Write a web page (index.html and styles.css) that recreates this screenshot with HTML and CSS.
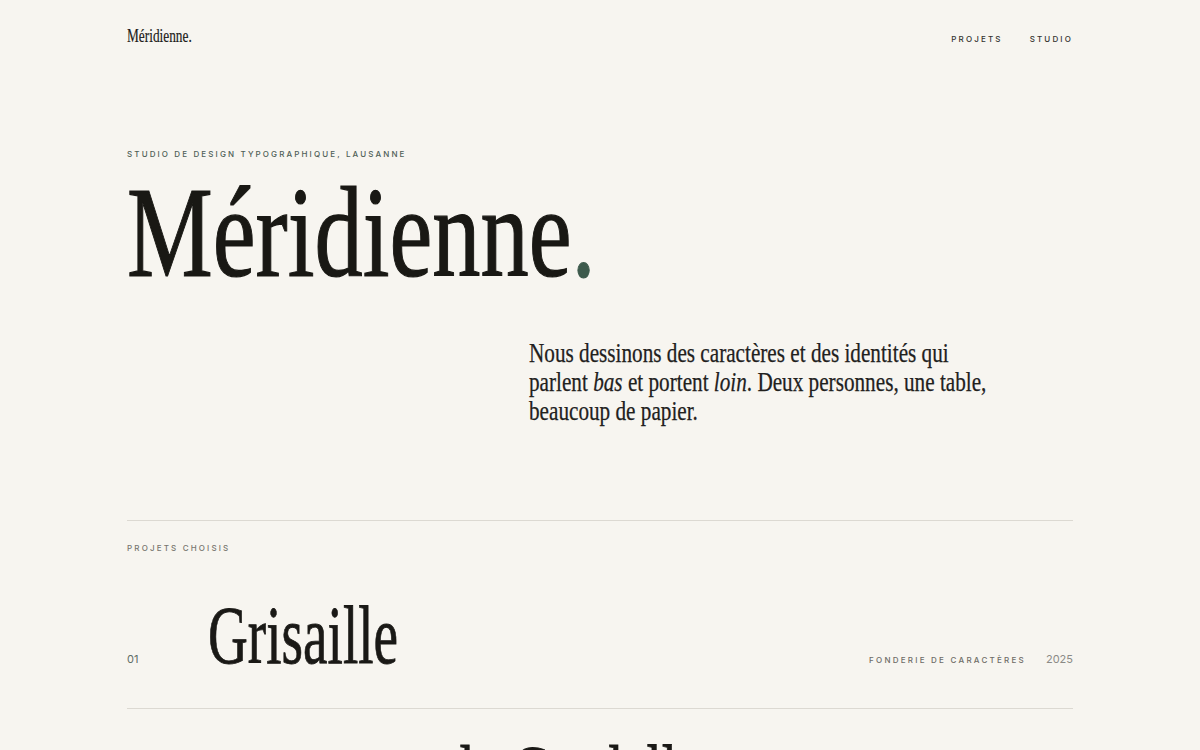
FILE: index.html
```html
<!DOCTYPE html>
<html lang="fr">
<head>
<meta charset="utf-8">
<title>Méridienne.</title>
<link rel="stylesheet" href="styles.css">
</head>
<body>
<div class="page">
  <header class="site-header">
    <a class="logo" href="#"><span class="logo-text">Méridienne.</span></a>
    <nav class="nav">
      <a href="#">Projets</a>
      <a href="#">Studio</a>
    </nav>
  </header>

  <section class="hero">
    <p class="eyebrow">Studio de design typographique, Lausanne</p>
    <h1 class="hero-title"><span class="hero-text">Méridienne<span class="dot">.</span></span></h1>
    <p class="intro">Nous dessinons des caractères et des identités qui parlent <em>bas</em> et portent <em>loin</em>. Deux personnes, une table, beaucoup de papier.</p>
  </section>

  <section class="projects">
    <h2 class="section-label">Projets choisis</h2>
    <ul class="project-list">
      <li class="project">
        <span class="project-num">01</span>
        <span class="project-title"><span class="project-name">Grisaille</span></span>
        <span class="project-meta">Fonderie de caractères</span>
        <span class="project-year">2025</span>
      </li>
      <li class="project">
        <span class="project-num">02</span>
        <span class="project-title"><span class="project-name">murmures de Cordelle</span></span>
        <span class="project-meta">Identité visuelle</span>
        <span class="project-year">2024</span>
      </li>
    </ul>
  </section>
</div>
</body>
</html>
```

FILE: styles.css
```css
* { box-sizing: border-box; }

html, body {
  margin: 0;
  padding: 0;
  background: #f7f5f0;
  color: #1a1916;
}

body {
  font-family: "Liberation Serif", "Times New Roman", serif;
}

a { color: inherit; text-decoration: none; }

.page {
  width: 946px;
  margin: 0 auto;
}

/* Header */
.site-header {
  display: flex;
  justify-content: space-between;
  align-items: baseline;
  padding-top: 26px;
}

.logo {
  font-size: 19.6px;
  line-height: 20px;
  color: #1c1b18;
}

.logo-text {
  display: inline-block;
  transform: scaleX(0.68);
  transform-origin: left center;
  -webkit-text-stroke: 0.2px #1c1b18;
}

.nav {
  display: flex;
  gap: 27px;
}

.nav a {
  font-family: "Inter", "Liberation Sans", sans-serif;
  font-size: 8px;
  line-height: 12px;
  font-weight: 500;
  letter-spacing: 0.27em;
  text-transform: uppercase;
  color: #34332f;
}

/* Hero */
.hero {
  padding-top: 102px;
}

.eyebrow {
  margin: 0;
  font-family: "Inter", "Liberation Sans", sans-serif;
  font-size: 8px;
  line-height: 12px;
  font-weight: 500;
  letter-spacing: 0.265em;
  text-transform: uppercase;
  color: #4f5f57;
}

.hero-title {
  margin: 7px 0 0;
  font-size: 130px;
  line-height: 130px;
  font-weight: 400;
  color: #191814;
}

.hero-text {
  display: inline-block;
  transform: scaleX(0.742);
  transform-origin: left center;
  -webkit-text-stroke: 1.2px #191814;
}

.dot {
  color: #3d5a4c;
  -webkit-text-stroke: 1.2px #3d5a4c;
}

.intro {
  margin: 42px 0 0 402px;
  width: 600px;
  font-size: 27px;
  line-height: 29px;
  color: #22211d;
  -webkit-text-stroke: 0.25px #22211d;
  transform: scaleX(0.785);
  transform-origin: left top;
}

.intro em { font-style: italic; }

/* Projects */
.projects {
  margin-top: 94px;
  border-top: 1px solid #dcd9d2;
}

.section-label {
  margin: 21px 0 0;
  font-family: "Inter", "Liberation Sans", sans-serif;
  font-size: 8px;
  line-height: 12px;
  font-weight: 500;
  letter-spacing: 0.27em;
  text-transform: uppercase;
  color: #77756f;
}

.project-list {
  list-style: none;
  margin: 16px 0 0;
  padding: 0;
}

.project {
  display: flex;
  align-items: baseline;
  padding: 24px 0 31px;
  border-bottom: 1px solid #dcd9d2;
}

.project-num {
  width: 81px;
  flex: none;
  font-family: "Inter", "Liberation Sans", sans-serif;
  font-size: 11px;
  color: #5f6d66;
}

.project-title {
  flex: 1;
  font-size: 83px;
  line-height: 83px;
  color: #1a1916;
  white-space: nowrap;
}

.project-name {
  display: inline-block;
  transform: scaleX(0.665);
  transform-origin: left center;
  -webkit-text-stroke: 0.8px #1a1916;
}

.project-meta {
  font-family: "Inter", "Liberation Sans", sans-serif;
  font-size: 8px;
  font-weight: 500;
  letter-spacing: 0.28em;
  text-transform: uppercase;
  color: #6e6c67;
}

.project-year {
  margin-left: 20px;
  font-family: "Inter", "Liberation Sans", sans-serif;
  font-size: 11px;
  color: #8b8a86;
}
```
